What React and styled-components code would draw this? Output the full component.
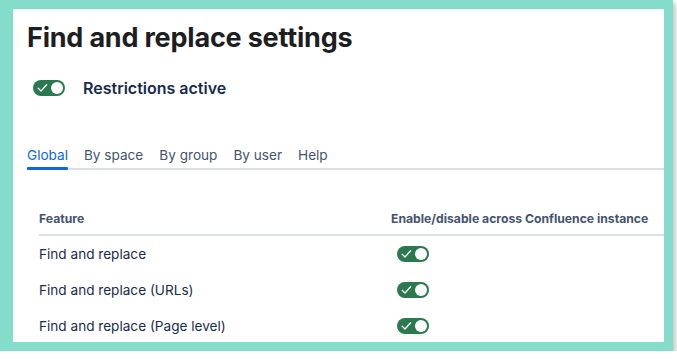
import React from "react";
import styled, { createGlobalStyle } from "styled-components";

const GlobalStyle = createGlobalStyle`
  html, body {
    margin: 0;
    padding: 0;
    background: #ffffff;
    font-family: Inter, "Noto Sans", "Liberation Sans", sans-serif;
  }
  * { box-sizing: border-box; }
`;

const Frame = styled.div`
  width: 673px;
  height: 351px;
  border: 9px solid #84ddca;
  border-left-width: 13px;
  box-shadow: 3px 3px 5px rgba(0, 0, 0, 0.22);
  background: #ffffff;
  overflow: hidden;
  display: flex;
  flex-direction: column;
`;

const Content = styled.div`
  padding: 11px 0 0 14px;
  display: flex;
  flex-direction: column;
  width: 900px;
`;

const Title = styled.h1`
  margin: 0;
  font-size: 27px;
  line-height: 36px;
  font-weight: 700;
  color: #1d1e21;
  letter-spacing: -0.2px;
`;

const StatusRow = styled.div`
  display: flex;
  align-items: center;
  gap: 18px;
  margin: 20px 0 0 6px;
  height: 24px;
`;

const StatusLabel = styled.span`
  font-size: 16px;
  font-weight: 600;
  color: #172b4d;
`;

const ToggleTrack = styled.span`
  position: relative;
  display: inline-flex;
  align-items: center;
  width: 32px;
  height: 16px;
  border-radius: 8px;
  background: ${(p) => (p.$on ? "#2b7a4f" : "#8590a2")};
  flex-shrink: 0;
`;

const Knob = styled.span`
  position: absolute;
  top: 2px;
  right: 2px;
  width: 12px;
  height: 12px;
  border-radius: 50%;
  background: #ffffff;
`;

const Check = styled.svg`
  position: absolute;
  left: 4px;
  top: 3px;
  width: 11px;
  height: 10px;
`;

function Toggle({ on = true }) {
  return (
    <ToggleTrack $on={on}>
      <Check viewBox="0 0 11 10" fill="none">
        <path d="M1.2 5.2 L4 8 L9.6 1.8" stroke="#ffffff" strokeWidth="1.3" strokeLinecap="round" strokeLinejoin="round" />
      </Check>
      <Knob />
    </ToggleTrack>
  );
}

const Tabs = styled.div`
  display: flex;
  gap: 16px;
  margin-top: 45px;
  border-bottom: 2px solid #dcdfe4;
`;

const Tab = styled.div`
  position: relative;
  font-size: 13.6px;
  line-height: 20px;
  padding-bottom: 3px;
  color: ${(p) => (p.$active ? "#0c66e4" : "#44546f")};
  &::after {
    content: "";
    position: absolute;
    left: 0;
    right: 0;
    bottom: -2px;
    height: 3px;
    border-radius: 1px;
    background: ${(p) => (p.$active ? "#0c66e4" : "transparent")};
  }
`;

const Table = styled.div`
  display: grid;
  grid-template-columns: 352px 1fr;
  margin: 41px 0 0 12px;
`;

const HeadCell = styled.div`
  font-size: 12.2px;
  font-weight: 700;
  color: #44546f;
  line-height: 16px;
  padding-bottom: 7px;
  border-bottom: 2px solid #dcdfe4;
`;

const Cell = styled.div`
  display: flex;
  align-items: center;
  height: 36px;
  font-size: 13.6px;
  color: #172b4d;
  padding-left: ${(p) => (p.$toggle ? "6px" : "0")};
`;

const rows = ["Find and replace", "Find and replace (URLs)", "Find and replace (Page level)"];
const tabs = ["Global", "By space", "By group", "By user", "Help"];

export default function App() {
  return (
    <>
      <GlobalStyle />
      <Frame>
        <Content>
          <Title>Find and replace settings</Title>
          <StatusRow>
            <Toggle />
            <StatusLabel>Restrictions active</StatusLabel>
          </StatusRow>
          <Tabs>
            {tabs.map((t, i) => (
              <Tab key={t} $active={i === 0}>{t}</Tab>
            ))}
          </Tabs>
          <Table>
            <HeadCell>Feature</HeadCell>
            <HeadCell>Enable/disable across Confluence instance</HeadCell>
            {rows.map((r) => (
              <React.Fragment key={r}>
                <Cell>{r}</Cell>
                <Cell $toggle><Toggle /></Cell>
              </React.Fragment>
            ))}
          </Table>
        </Content>
      </Frame>
    </>
  );
}
